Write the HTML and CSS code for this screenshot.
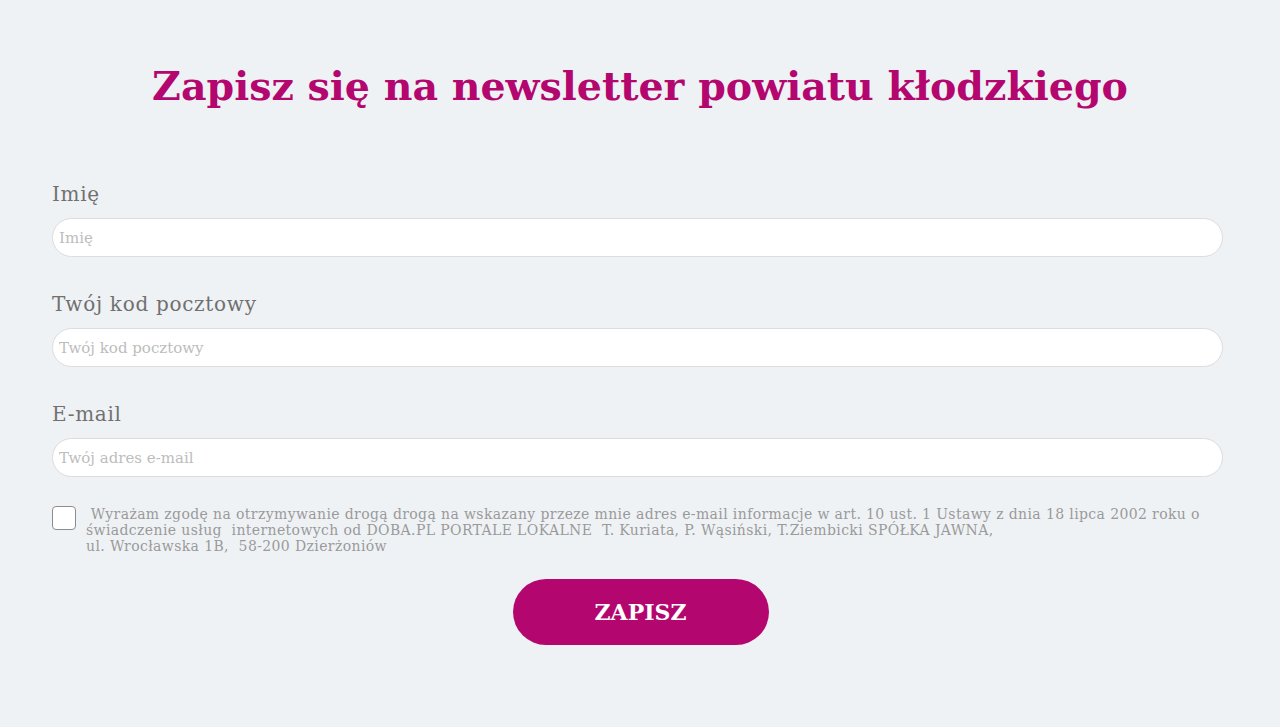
FILE: index.html
```html
<!DOCTYPE html>
<html lang="pl">
<head>
  <meta charset="UTF-8" />
  <meta name="viewport" content="width=device-width, initial-scale=1" />
  <title>Newsletter powiatu kłodzkiego</title>
  <link rel="stylesheet" href="styles.css">
</head>
<body>
  <div class="newsletter">
    <h1>Zapisz się na newsletter powiatu kłodzkiego</h1>

    <form class="form">
      <div class="field">
        <label for="name">Imię</label>
        <input type="text" id="name" placeholder="Imię" />
      </div>

      <div class="field">
        <label for="zip">Twój kod pocztowy</label>
        <input type="text" id="zip" placeholder="Twój kod pocztowy" />
      </div>

      <div class="field">
        <label for="email">E-mail</label>
        <input type="email" id="email" placeholder="Twój adres e-mail" />
      </div>

      <div class="consent">
        <span class="check"></span>
        <p>&nbsp;Wyrażam zgodę na otrzymywanie drogą drogą na wskazany przeze mnie adres e-mail informacje w art. 10 ust. 1 Ustawy z dnia 18 lipca 2002 roku o świadczenie usług &nbsp;internetowych od DOBA.PL PORTALE LOKALNE &nbsp;T. Kuriata, P. Wąsiński, T.Ziembicki SPÓŁKA JAWNA,<br>ul. Wrocławska 1B, &nbsp;58-200 Dzierżoniów</p>
      </div>

      <div class="actions">
        <button type="button">ZAPISZ</button>
      </div>
    </form>
  </div>
</body>
</html>
```

FILE: styles.css
```css
body {
  margin: 0;
  background: #eff2f5;
  font-family: 'DejaVu Serif', serif;
  color: #6f6f6f;
}
.newsletter {
  padding: 56px 57px 60px 52px;
}
h1 {
  margin: 0 0 64px 0;
  padding-left: 5px;
  text-align: center;
  color: #b3076f;
  font-size: 39.5px;
  font-weight: 700;
  line-height: 60px;
}
.field + .field {
  margin-top: 33px;
}
label {
  display: block;
  font-size: 20px;
  line-height: 28px;
  letter-spacing: 0.7px;
  margin-bottom: 10px;
  color: #707070;
}
input {
  display: block;
  box-sizing: border-box;
  width: 100%;
  height: 39px;
  padding: 0 6px;
  border: 1px solid #dcdcdc;
  border-radius: 20px;
  background: #fff;
  font-family: inherit;
  font-size: 15px;
  color: #555;
}
input::placeholder {
  color: #bdbdbd;
}
.consent {
  display: flex;
  align-items: flex-start;
  gap: 10px;
  margin-top: 29px;
}
.check {
  flex: none;
  width: 22px;
  height: 22px;
  border: 1px solid #8d8d8d;
  border-radius: 4px;
  background: #fff;
}
.consent p {
  margin: 0;
  font-size: 14px;
  line-height: 16px;
  letter-spacing: 0.38px;
  color: #9a9a9a;
}
.actions {
  display: flex;
  justify-content: center;
  padding-left: 6px;
  margin-top: 25px;
}
button {
  width: 256px;
  height: 66px;
  border: none;
  border-radius: 33px;
  background: #b3076f;
  color: #fff;
  font-family: inherit;
  font-weight: 700;
  font-size: 22px;
  cursor: pointer;
}
```
